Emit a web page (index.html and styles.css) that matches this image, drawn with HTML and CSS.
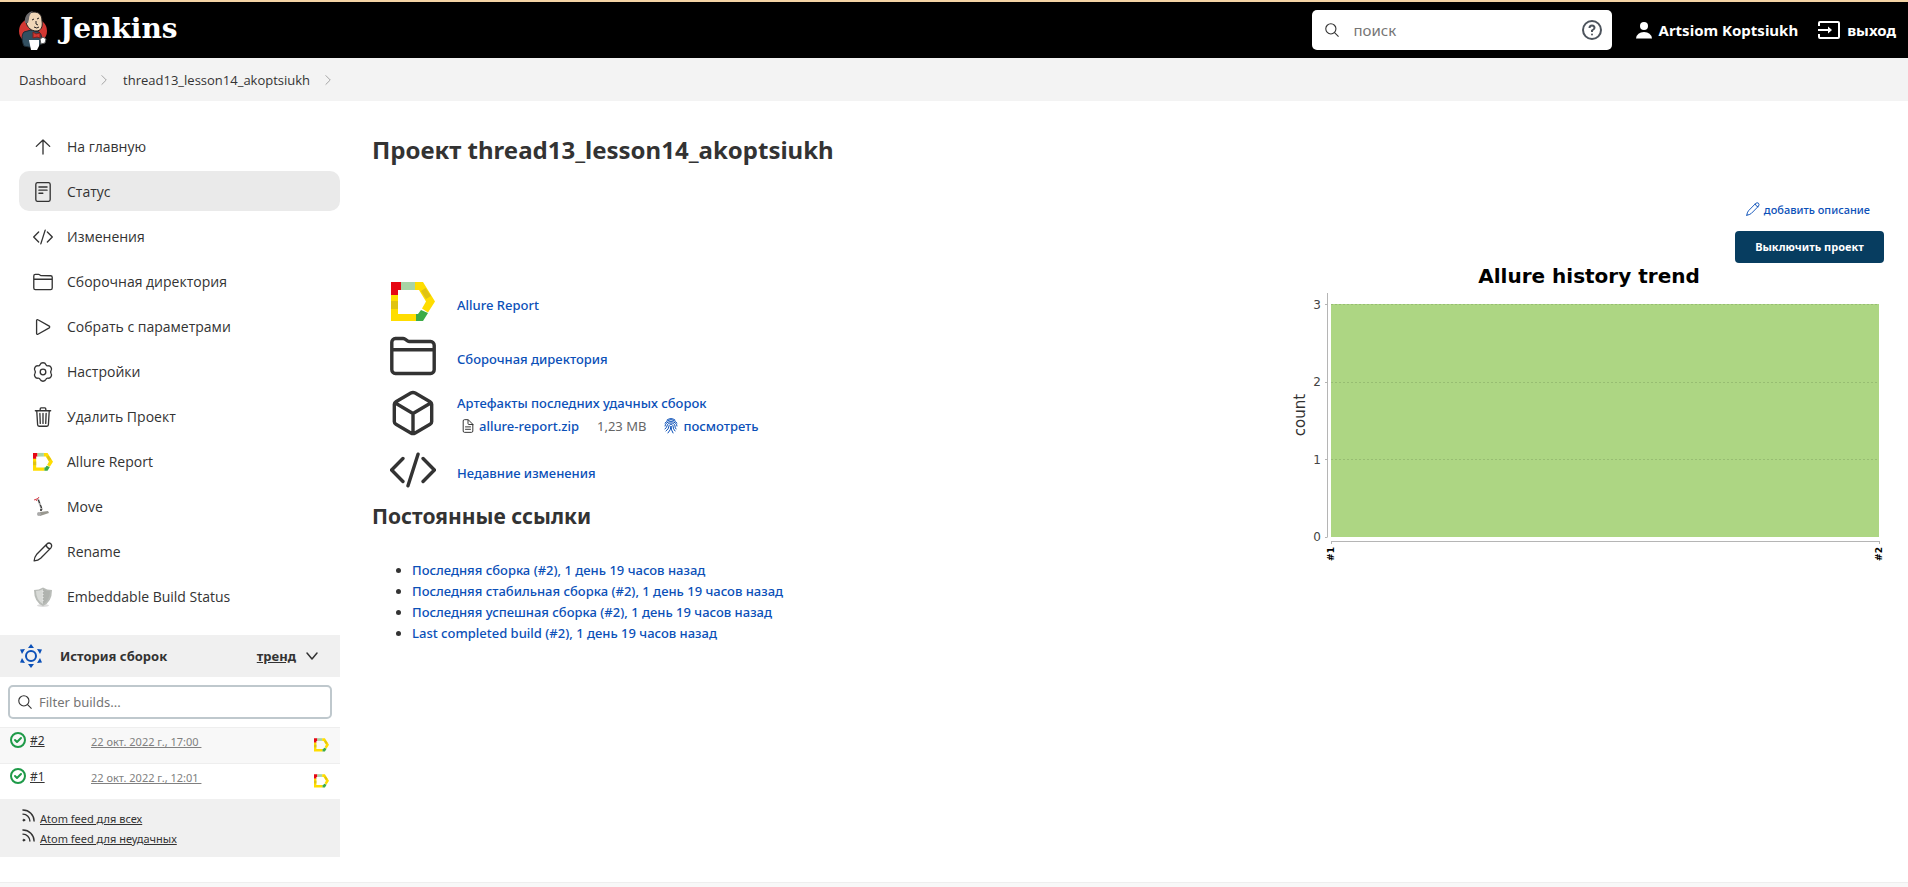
FILE: index.html
```html
<!DOCTYPE html>
<html lang="ru">
<head>
<meta charset="utf-8">
<title>thread13_lesson14_akoptsiukh [Jenkins]</title>
<link rel="stylesheet" href="styles.css">
</head>
<body>
<svg class="sprite" aria-hidden="true">
  <symbol id="arrow-up" viewBox="0 0 512 512"><path d="M84 240L256 76l172 164M256 76v362"/></symbol>
  <symbol id="reader" viewBox="0 0 512 512"><rect x="72" y="16" width="368" height="480" rx="48"/><path d="M152 128h208M152 208h208M152 288h100"/></symbol>
  <symbol id="code" viewBox="0 0 512 512"><path d="M144 384L18 256l126-128M368 384l126-128-126-128M312 80l-112 352"/></symbol>
  <symbol id="folder" viewBox="0 0 512 512"><path d="M452 450H60a40 40 0 01-40-40V102a40 40 0 0140-40h85a40 40 0 0122 7l28 19a40 40 0 0022 7H452a40 40 0 0140 40v275a40 40 0 01-40 40zM20 186h472"/></symbol>
  <symbol id="play" viewBox="0 0 512 512"><path d="M92 92v328c0 20 18 32 34 22l290-164c14-9 14-35 0-44L126 70c-16-10-34 2-34 22z"/></symbol>
  <symbol id="gear" viewBox="0 0 512 512"><circle cx="256" cy="256" r="72"/><path d="M180 68Q200 20 256 20Q312 20 332 68Q346 104 388 98Q434 90 462 138Q490 186 462 222Q440 256 462 290Q490 326 462 374Q434 422 388 414Q346 408 332 444Q312 492 256 492Q200 492 180 444Q166 408 124 414Q78 422 50 374Q22 326 50 290Q72 256 50 222Q22 186 50 138Q78 90 124 98Q166 104 180 68Z"/></symbol>
  <symbol id="trash" viewBox="0 0 512 512"><path d="M96 96l22 360c1 22 16 36 36 36h204c20 0 35-14 36-36l22-360M60 96h392M184 96V48a24 24 0 0124-24h96a24 24 0 0124 24v48M256 164v256M176 164l10 256M336 164l-10 256"/></symbol>
  <symbol id="cube" viewBox="0 0 512 512"><path d="M464 352V160a36 36 0 00-18-30L280 34a48 48 0 00-48 0L66 130a36 36 0 00-18 30v192a36 36 0 0018 30l166 96a48 48 0 0048 0l166-96a36 36 0 0018-30zM54 142l202 120 202-120M256 480V262"/></symbol>
  <symbol id="search" viewBox="0 0 512 512"><circle cx="214" cy="214" r="186"/><path d="M350 350l136 136"/></symbol>
  <symbol id="pencil" viewBox="0 0 512 512"><path d="M30 482Q36 386 90 322L350 56Q406 4 456 44Q500 96 454 156L196 416Q132 474 30 482ZM336 72q8 76 100 104"/></symbol>
  <symbol id="document" viewBox="0 0 512 512"><path d="M432 208v232a48 48 0 01-48 48H128a48 48 0 01-48-48V72a48 48 0 0148-48h120a32 32 0 0123 9l152 152a32 32 0 019 23zM256 32v136a32 32 0 0032 32h136M164 288h184M164 376h184"/></symbol>
  <symbol id="chevron-down" viewBox="0 0 16 16"><path d="M3 5l5 6 5-6"/></symbol>
  <symbol id="chevron-right" viewBox="0 0 8 16"><path d="M1 3l5 5-5 5"/></symbol>
  <symbol id="feed" viewBox="0 0 14 14"><circle class="feed-dot" cx="2" cy="12" r="1"/><path d="M1 1a12 12 0 0112 12M1 5.500a7.500 7.500 0 017.500 7.500"/></symbol>
  <symbol id="success" viewBox="0 0 16 16"><circle cx="8" cy="8" r="7"/><path d="M5 8l2 2 4-4"/></symbol>
  <symbol id="fingerprint" viewBox="0 0 14 16"><path d="M3 2Q7-1 11 2M1 5Q7-2 13 5M1 8C1 2 13 2 13 8M1 11Q3 9 3 8C3 4 11 4 11 8Q11 10 12 11M2 13Q5 11 5 8C5 6 9 6 9 8Q9 11 11 13M4 15Q7 12 7 8Q7 12 9 15"/></symbol>
  <symbol id="allure" viewBox="0 0 44 40"><path fill="#ffdd00" d="M0 12h7v20h18v7H0z"/><path fill="#e0c311" d="M0 19h7v8H0z"/><path fill="#e60613" d="M0 0h10v8H7v5H0z"/><path fill="#a8d4a5" d="M10 0h14v8H10z"/><path fill="#ffdd00" d="M24 0h8l12 19.500-7 11-6-4L35 19.500 28 8h-4z"/><path fill="#e0c311" d="M34.500 6l5.500 8-5 3-5-8z"/><path fill="#3cab47" d="M30 28l7 3-5 8h-7v-7h2z"/></symbol>
</svg>

<header class="header">
  <a class="brand" href="#">
    <svg class="butler" viewBox="0 0 30 41" aria-hidden="true">
      <ellipse cx="15" cy="21" rx="14" ry="13" fill="#d33833"/>
      <path d="M6 36c-2-4-3-11 0-14l7-2 8 2c3 2 3 7 2 12l-4 3H11z" fill="#335061" stroke="#1d2b36"/>
      <path d="M8 12C7 6 11 2 16 2c5 0 8 3 8 9 1 6-1 10-6 10-4 0-9-3-10-9z" fill="#f0d6b7" stroke="#231f20"/>
      <path d="M7 13C6 6 10 2 15 1c-3 3-4 5-4 8l-1 4z" fill="#6d6b6d"/>
      <path d="M14 10l2-1M19 9l2-1M18 11v3l2 1M16 17q3 2 5 0" fill="none" stroke="#231f20"/>
      <path d="M15 22l3 2 4-1v5l-3-1-4 1z" fill="#d33833" stroke="#81201c"/>
      <path d="M11 30h10v6l-2 4h-6z" fill="#fff"/>
      <path d="M22 29l3-2 3 2-1 4-4 1z" fill="#fff" stroke="#555"/>
    </svg>
    <span>Jenkins</span>
  </a>
  <label class="search">
    <svg class="icon search-icon"><use href="#search"/></svg>
    <input type="search" placeholder="поиск" aria-label="поиск">
    <svg class="help" viewBox="0 0 20 20" aria-hidden="true"><circle cx="10" cy="10" r="9"/><path d="M7.500 8q0-2.500 2.500-2.500T12.500 8Q12.500 9 10 10.500V12"/><circle class="dot" cx="10" cy="14.500" r="1"/></svg>
  </label>
  <nav class="account">
    <a href="#"><svg class="person" viewBox="0 0 16 17" aria-hidden="true"><circle cx="8" cy="4" r="4"/><path d="M0 16.500Q1 10 8 10T16 16.500z"/></svg>Artsiom Koptsiukh</a>
    <a href="#"><svg class="exit" viewBox="0 0 22 18" aria-hidden="true"><path d="M1 5V2q0-1 1-1h18q1 0 1 1v14q0 1-1 1H2q-1 0-1-1v-3M0 9h12"/><path class="head" d="M10 5.500L14 9l-4 3.500z"/></svg>выход</a>
  </nav>
</header>

<nav class="crumbs">
  <a href="#">Dashboard</a>
  <svg class="crumb-arrow"><use href="#chevron-right"/></svg>
  <a href="#">thread13_lesson14_akoptsiukh</a>
  <svg class="crumb-arrow"><use href="#chevron-right"/></svg>
</nav>

<div class="page">
  <aside class="side">
    <nav class="tasks">
      <a class="task" href="#"><svg class="icon"><use href="#arrow-up"/></svg>На главную</a>
      <a class="task active" href="#"><svg class="icon"><use href="#reader"/></svg>Статус</a>
      <a class="task" href="#"><svg class="icon"><use href="#code"/></svg>Изменения</a>
      <a class="task" href="#"><svg class="icon"><use href="#folder"/></svg>Сборочная директория</a>
      <a class="task" href="#"><svg class="icon"><use href="#play"/></svg>Собрать с параметрами</a>
      <a class="task" href="#"><svg class="icon"><use href="#gear"/></svg>Настройки</a>
      <a class="task" href="#"><svg class="icon"><use href="#trash"/></svg>Удалить Проект</a>
      <a class="task" href="#"><svg class="art"><use href="#allure"/></svg>Allure Report</a>
      <a class="task" href="#"><svg class="art" viewBox="0 0 20 20"><path d="M1 3l4-1.500M3 4l3-4" stroke="#d8434e" fill="none"/><path d="M5 2l4 11" stroke="#aaa" stroke-width="2"/><path d="M5.500 3l1 3m1 2l1 3" stroke="#222"/><path d="M7 15l8-1 1 2-9 3z" fill="#999890"/><circle cx="6" cy="17" r="2" fill="#aaa"/><circle cx="8" cy="13" r="1" fill="#222"/></svg>Move</a>
      <a class="task" href="#"><svg class="icon"><use href="#pencil"/></svg>Rename</a>
      <a class="task" href="#"><svg class="art" viewBox="0 0 20 20"><ellipse cx="10" cy="18.500" rx="6" ry="1.500" fill="#ddd"/><path d="M1 3q5 0 9-2.500Q14 3 19 3q0 12-9 16Q1 15 1 3z" fill="#b9bcb8"/><path d="M3 4q4 0 7-2v15Q3 13 3 4z" fill="#d8dad7"/><path d="M10 2q3 2 7 2 0 9-7 13z" fill="#b0b3af"/><path d="M10 4v10" stroke="#eee" stroke-dasharray="1 2"/></svg>Embeddable Build Status</a>
    </nav>

    <section class="history">
      <div class="history-head">
        <svg class="sun" viewBox="0 0 22 24" aria-hidden="true"><circle cx="11" cy="12" r="5"/><path d="M8 4L11 0l3 4zM8 20L11 24l3-4zM0 5.500l5-.5-3 5zM22 5.500l-5-.5 3 5zM0 18.500l5 .5-3-5zM22 18.500l-5 .5 3-5z"/></svg>
        <h2>История сборок</h2>
        <a href="#">тренд</a>
        <svg class="icon toggle"><use href="#chevron-down"/></svg>
      </div>
      <label class="filter">
        <svg class="icon"><use href="#search"/></svg>
        <input type="search" placeholder="Filter builds..." aria-label="Filter builds">
      </label>
      <table class="builds">
        <tr><td class="num"><span><svg class="ok"><use href="#success"/></svg><a href="#">#2</a></span></td><td><a class="date" href="#">22 окт. 2022 г., 17:00&nbsp;</a></td><td class="badge"><svg><use href="#allure"/></svg></td></tr>
        <tr><td class="num"><span><svg class="ok"><use href="#success"/></svg><a href="#">#1</a></span></td><td><a class="date" href="#">22 окт. 2022 г., 12:01&nbsp;</a></td><td class="badge"><svg><use href="#allure"/></svg></td></tr>
      </table>
      <div class="feeds">
        <span><svg><use href="#feed"/></svg><a href="#">Atom feed для всех</a></span>
        <span><svg><use href="#feed"/></svg><a href="#">Atom feed для неудачных</a></span>
      </div>
    </section>
  </aside>

  <main class="main">
    <h1>Проект thread13_lesson14_akoptsiukh</h1>
    <div class="columns">
      <div class="content">
        <ul class="links">
          <li class="row"><svg class="big allure"><use href="#allure"/></svg><a href="#">Allure Report</a></li>
          <li class="row"><svg class="big"><use href="#folder"/></svg><a href="#">Сборочная директория</a></li>
          <li class="row tall"><svg class="big"><use href="#cube"/></svg>
            <div>
              <a href="#">Артефакты последних удачных сборок</a>
              <div class="artifact">
                <svg class="doc"><use href="#document"/></svg><a href="#">allure-report.zip</a>
                <span class="size">1,23 MB</span>
                <svg class="print"><use href="#fingerprint"/></svg><a href="#">посмотреть</a>
              </div>
            </div>
          </li>
          <li class="row"><svg class="big"><use href="#code"/></svg><a href="#">Недавние изменения</a></li>
        </ul>
        <h2>Постоянные ссылки</h2>
        <ul class="permalinks">
          <li><a href="#">Последняя сборка (#2), 1 день 19 часов назад</a></li>
          <li><a href="#">Последняя стабильная сборка (#2), 1 день 19 часов назад</a></li>
          <li><a href="#">Последняя успешная сборка (#2), 1 день 19 часов назад</a></li>
          <li><a href="#">Last completed build (#2), 1 день 19 часов назад</a></li>
        </ul>
      </div>
      <div class="extra">
        <a class="describe" href="#"><svg><use href="#pencil"/></svg>добавить описание</a>
        <button type="button">Выключить проект</button>
        <svg class="chart" viewBox="0 0 600 300" role="img" aria-label="Allure history trend">
          <text class="chart-title" x="305" y="20">Allure history trend</text>
          <rect x="47" y="41" width="548" height="233" fill="#add683"/>
          <path class="grid" d="M47 41.500H595M47 119.500H595M47 196.500H595"/>
          <path class="axis" d="M43.500 30V274.500M41 41.500h2M41 119.500h2M41 196.500h2M41 274.500h2M47 278.500H595.500M47.500 278v3M595.500 278v3"/>
          <g class="ticks"><text x="37" y="46">3</text><text x="37" y="123">2</text><text x="37" y="201">1</text><text x="37" y="278">0</text></g>
          <text class="chart-label" transform="translate(21 152) rotate(-90)">count</text>
          <text class="build-label" transform="translate(50 291) rotate(-90)">#1</text>
          <text class="build-label" transform="translate(598 291) rotate(-90)">#2</text>
        </svg>
      </div>
    </div>
  </main>
</div>
<footer class="footer"></footer>
</body>
</html>
```
FILE: styles.css
```css
* { box-sizing: border-box; }
body {
  margin: 0;
  min-height: 100vh;
  display: flex;
  flex-direction: column;
  font-family: "Noto Sans", "Open Sans", sans-serif;
  font-size: 13px;
  line-height: 20px;
  color: #333;
  background: #fff;
}
a { color: #0b50b8; text-decoration: none; }
h1, h2, ul { margin: 0; padding: 0; }
svg { flex: none; display: block; }
.sprite { position: absolute; width: 0; height: 0; }
.icon, .big, .doc, .print, .ok, .describe svg, .crumb-arrow, .feeds svg {
  fill: none;
  stroke: currentColor;
  stroke-width: 34px;
  stroke-linecap: round;
  stroke-linejoin: round;
}
.icon { width: 20px; height: 20px; }

.header {
  display: flex;
  align-items: center;
  height: 58px;
  padding: 0 12px 0 18px;
  border-top: 2px solid #f3d3a4;
  background: #000;
}
.brand {
  display: flex;
  align-items: center;
  gap: 12px;
  margin-right: auto;
  color: #fff;
  font: bold 28px/36px "DejaVu Serif", serif;
}
.brand span { padding-bottom: 2px; }
.butler { width: 30px; height: 41px; }
.search {
  display: flex;
  align-items: center;
  gap: 15px;
  width: 300px;
  height: 40px;
  padding: 0 10px 0 13px;
  border-radius: 5px;
  background: #fff;
}
.search-icon { width: 14px; height: 14px; stroke-width: 40px; }
.search input, .filter input {
  flex: 1;
  min-width: 0;
  padding: 0;
  border: 0;
  outline: 0;
  background: none;
  font: inherit;
}
.search input { font-size: 15px; }
input::placeholder { color: #757575; opacity: 1; }
.help { width: 20px; height: 20px; fill: none; stroke: #4d545d; stroke-width: 2px; }
.help .dot { fill: #4d545d; stroke: none; }
.account { display: flex; gap: 20px; margin-left: 24px; }
.account a { display: flex; align-items: center; gap: 7px; color: #fff; font-weight: bold; font-size: 15px; }
.person { width: 16px; height: 17px; fill: #fff; }
.exit { width: 22px; height: 18px; fill: none; stroke: #fff; stroke-width: 2px; }
.exit .head { fill: #fff; stroke: none; }

.crumbs {
  display: flex;
  align-items: center;
  gap: 15px;
  height: 43px;
  padding: 0 19px;
  background: #f3f3f3;
}
.crumbs a { color: #333; font-family: "Open Sans", "Noto Sans", sans-serif; }
.crumb-arrow { width: 7px; height: 14px; color: #999; stroke-width: 1px; }

.page { display: flex; flex: 1; }
.side { width: 340px; flex: none; }
.tasks { display: flex; flex-direction: column; gap: 5px; padding: 25px 0 19px 19px; }
.task {
  display: flex;
  align-items: center;
  gap: 14px;
  height: 40px;
  padding: 1px 14px 0;
  border-radius: 10px;
  color: #333;
  font-family: "Open Sans", "Noto Sans", sans-serif;
  font-size: 14px;
  font-weight: 500;
}
.task.active { background: #eaeaea; }
.task .art { width: 20px; height: 20px; }

.history-head {
  display: flex;
  align-items: center;
  height: 42px;
  padding: 0 20px;
  background: #f0f0f0;
}
.history-head h2 { margin: 0 auto 0 18px; font-size: 13px; line-height: 20px; }
.history-head a { color: #333; font-weight: bold; text-decoration: underline; }
.sun { width: 22px; height: 24px; fill: #0b50b8; }
.sun circle { fill: none; stroke: #0b50b8; stroke-width: 2px; }
.toggle { width: 16px; height: 16px; margin-left: 8px; stroke-width: 1.5px; }
.filter {
  display: flex;
  align-items: center;
  gap: 7px;
  height: 34px;
  margin: 8px;
  padding: 0 8px;
  border: 2px solid #bfc8cd;
  border-radius: 5px;
}
.filter .icon { width: 14px; height: 14px; stroke-width: 40px; }
.builds { width: 100%; border-spacing: 0; table-layout: fixed; font-size: 11px; line-height: 18px; }
.builds tr { height: 36px; }
.builds tr:first-child { background: #f8f8f8; }
.builds td { padding: 5px 0 0; border-top: 1px solid #eee; vertical-align: top; }
.builds .num { width: 91px; padding: 4px 0 0 10px; font-size: 12px; }
.num span { display: flex; gap: 4px; }
.builds a { color: #333; text-decoration: underline; }
.builds .date { color: #808080; }
.ok { width: 16px; height: 16px; color: #1e9a48; stroke-width: 2px; }
.builds .badge { width: 26px; padding-top: 10px; }
.badge svg { width: 15px; height: 14px; }
.feeds {
  display: flex;
  flex-direction: column;
  height: 58px;
  padding: 10px 22px;
  background: #f0f0f0;
  font-size: 11px;
}
.feeds span { display: flex; gap: 5px; }
.feeds a { color: #333; text-decoration: underline; }
.feeds svg { width: 13px; height: 13px; stroke-width: 1.5px; }
.feed-dot { fill: #333; stroke-width: 1px; }

.main { flex: 1; min-width: 0; padding: 32px 24px 0 32px; }
.main h1 { font-size: 24px; line-height: 34px; }
.columns { display: flex; justify-content: space-between; padding-top: 33px; }
.content { padding-top: 75px; }
.links { list-style: none; padding-left: 18px; }
.row { display: flex; align-items: center; gap: 21px; height: 54px; }
.row.tall { height: 60px; }
.row > a, .row > div { padding-top: 6px; }
.links a, .permalinks a { font-weight: 500; }
.big { width: 46px; height: 46px; stroke-width: 38px; }
.big.allure { width: 46px; height: 40px; stroke: none; }
.artifact { display: flex; align-items: center; height: 26px; padding-left: 4px; }
.doc { width: 14px; height: 16px; margin-right: 4px; stroke-width: 36px; }
.size { margin: 0 18px; color: #666; }
.print { width: 14px; height: 16px; margin-right: 5px; color: #0b50b8; stroke-width: 1px; }
.content h2 { font-size: 21px; line-height: 32px; margin: 3px 0 28px; }
.permalinks { padding-left: 40px; line-height: 21px; }
.extra { width: 600px; display: flex; flex-direction: column; align-items: flex-end; }
.describe { display: flex; gap: 4px; margin-right: 14px; font-size: 11px; line-height: 20px; font-weight: 500; }
.describe svg { width: 14px; height: 14px; margin-top: 2px; }
.extra button {
  width: 149px;
  height: 32px;
  margin-top: 11px;
  padding: 0;
  border: 0;
  border-radius: 4px;
  background: #073d60;
  color: #fff;
  font: bold 11px/18px "Noto Sans", sans-serif;
}
.chart { width: 100%; height: 300px; font-family: "DejaVu Sans", sans-serif; }
.chart-title { font-size: 20px; font-weight: bold; text-anchor: middle; fill: #000; }
.grid { stroke: #97bd72; stroke-dasharray: 2 2; }
.axis { fill: none; stroke: #b5b5b5; }
.ticks { font-size: 12px; text-anchor: end; fill: #444; }
.chart-label { font-size: 15px; text-anchor: middle; fill: #333; }
.build-label { font-size: 9px; font-weight: bold; text-anchor: middle; fill: #000; }
.footer { height: 5px; background: #f8f8f8; border-top: 1px solid #eee; }
```
